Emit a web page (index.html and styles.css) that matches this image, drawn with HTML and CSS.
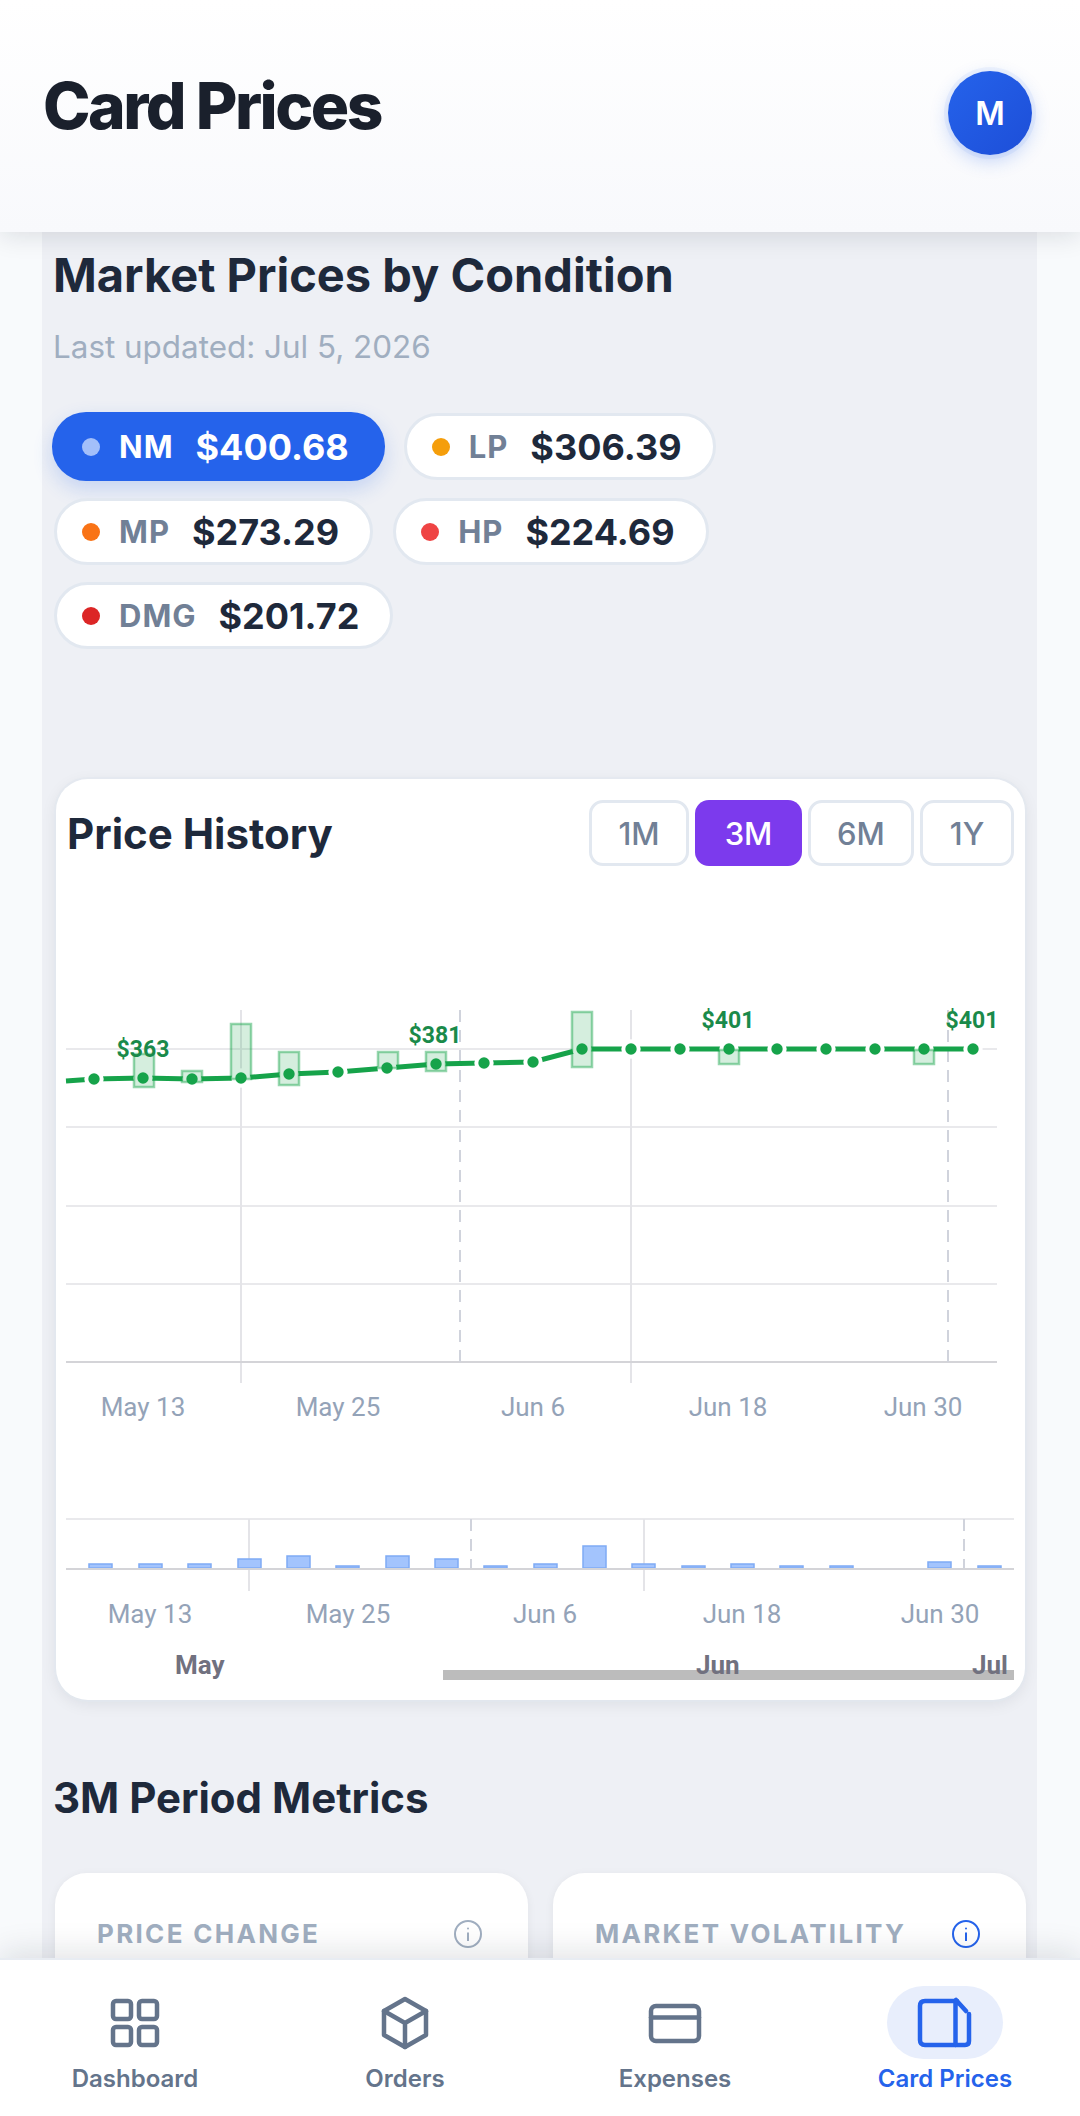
FILE: index.html
```html
<!DOCTYPE html>
<html>

<head>
	<title>Card Prices</title>
	<link rel="stylesheet" href="styles.css">
</head>

<body>
	<div class="app">
		<header class="top-bar">
			<h1>Card Prices</h1>
			<div class="avatar">M</div>
		</header>

		<main class="content">
			<h2 class="section-title">Market Prices by Condition</h2>
			<p class="updated">Last updated: Jul 5, 2026</p>

			<div class="chips">
				<div class="chip active"><span class="dot dot-nm"></span><span class="cond">NM</span><span class="price">$400.68</span></div>
				<div class="chip"><span class="dot dot-lp"></span><span class="cond">LP</span><span class="price">$306.39</span></div>
				<div class="chip"><span class="dot dot-mp"></span><span class="cond">MP</span><span class="price">$273.29</span></div>
				<div class="chip"><span class="dot dot-hp"></span><span class="cond">HP</span><span class="price">$224.69</span></div>
				<div class="chip"><span class="dot dot-dmg"></span><span class="cond">DMG</span><span class="price">$201.72</span></div>
			</div>

			<section class="chart-card">
				<div class="chart-head">
					<h2 class="chart-title">Price History</h2>
					<div class="ranges">
						<button class="range r-1m">1M</button>
						<button class="range r-3m active">3M</button>
						<button class="range r-6m">6M</button>
						<button class="range r-1y">1Y</button>
					</div>
				</div>
				<svg class="chart" width="969" height="834" viewBox="0 87 969 834">
					<defs>
						<g id="dot-set">
							<circle cx="38" cy="300" r="5.7"/><circle cx="87" cy="299" r="5.7"/><circle cx="136" cy="300" r="5.7"/>
							<circle cx="185" cy="299" r="5.7"/><circle cx="233" cy="295" r="5.7"/><circle cx="282" cy="293" r="5.7"/>
							<circle cx="331" cy="289" r="5.7"/><circle cx="380" cy="285" r="5.7"/><circle cx="428" cy="284" r="5.7"/>
							<circle cx="477" cy="283" r="5.7"/><circle cx="526" cy="270" r="5.7"/><circle cx="575" cy="270" r="5.7"/>
							<circle cx="624" cy="270" r="5.7"/><circle cx="673" cy="270" r="5.7"/><circle cx="721" cy="270" r="5.7"/>
							<circle cx="770" cy="270" r="5.7"/><circle cx="819" cy="270" r="5.7"/><circle cx="868" cy="270" r="5.7"/>
							<circle cx="917" cy="270" r="5.7"/>
						</g>
					</defs>
					<g class="grid">
						<path d="M10 270H941M10 348H941M10 427H941M10 505H941"/>
						<path class="grid-v" d="M185 231V604M575 231V604"/>
					</g>
					<path class="axis" d="M10 583H941"/>
					<path class="dash" d="M404 231V583M892 231V583"/>

					<polyline class="line" points="10,302 38,300 87,299 136,300 185,299 233,295 282,293 331,289 380,285 428,284 477,283 526,270 575,270 624,270 673,270 721,270 770,270 819,270 868,270 917,270"/>
					<use class="halo" href="#dot-set"/>

					<g class="candle">
						<rect x="78" y="275" width="20" height="33"/>
						<rect x="126" y="292" width="20" height="11"/>
						<rect x="175" y="245" width="20" height="55"/>
						<rect x="223" y="273" width="20" height="33"/>
						<rect x="322" y="273" width="20" height="16"/>
						<rect x="370" y="273" width="20" height="19"/>
						<rect x="516" y="233" width="20" height="55"/>
						<rect x="663" y="271" width="20" height="14"/>
						<rect x="858" y="271" width="20" height="14"/>
					</g>

					<use class="points" href="#dot-set"/>
					<g class="value-label">
						<text x="87" y="278">$363</text>
						<text x="379" y="264">$381</text>
						<text x="672" y="249">$401</text>
						<text x="916" y="249">$401</text>
					</g>
					<g class="date-label">
						<text x="87" y="637">May 13</text>
						<text x="282" y="637">May 25</text>
						<text x="477" y="637">Jun 6</text>
						<text x="672" y="637">Jun 18</text>
						<text x="867" y="637">Jun 30</text>
					</g>

					<g class="grid">
						<path d="M10 740H958"/>
						<path class="grid-v" d="M193 740V812M588 740V812"/>
					</g>
					<path class="dash" d="M415 740V790M908 740V790"/>
					<g class="volume">
						<rect x="33" y="785" width="23" height="4"/>
						<rect x="83" y="785" width="23" height="4"/>
						<rect x="132" y="785" width="23" height="4"/>
						<rect x="182" y="780" width="23" height="9"/>
						<rect x="231" y="777" width="23" height="12"/>
						<rect x="280" y="787" width="23" height="2"/>
						<rect x="330" y="777" width="23" height="12"/>
						<rect x="379" y="780" width="23" height="9"/>
						<rect x="428" y="787" width="23" height="2"/>
						<rect x="478" y="785" width="23" height="4"/>
						<rect x="527" y="767" width="23" height="22"/>
						<rect x="576" y="785" width="23" height="4"/>
						<rect x="626" y="787" width="23" height="2"/>
						<rect x="675" y="785" width="23" height="4"/>
						<rect x="724" y="787" width="23" height="2"/>
						<rect x="774" y="787" width="23" height="2"/>
						<rect x="872" y="783" width="23" height="6"/>
						<rect x="922" y="787" width="23" height="2"/>
					</g>
					<path class="axis" d="M10 790H958"/>
					<g class="date-label">
						<text x="94" y="844">May 13</text>
						<text x="292" y="844">May 25</text>
						<text x="489" y="844">Jun 6</text>
						<text x="686" y="844">Jun 18</text>
						<text x="884" y="844">Jun 30</text>
					</g>

					<rect class="scroll-bar" x="387" y="891" width="571" height="10"/>
					<g class="month-label">
						<text x="119" y="895">May</text>
						<text x="640" y="895">Jun</text>
						<text x="916" y="895">Jul</text>
					</g>
				</svg>
			</section>

			<h2 class="section-title metrics-title">3M Period Metrics</h2>

			<div class="metrics">
				<div class="metric">
					<span class="metric-label">PRICE CHANGE</span>
					<svg class="info" width="28" height="28" viewBox="0 0 28 28"><circle cx="14" cy="14" r="13"/><path d="M14 12.5V21"/><circle class="info-dot" cx="14" cy="8.5" r="1"/></svg>
				</div>
				<div class="metric">
					<span class="metric-label">MARKET VOLATILITY</span>
					<svg class="info info-blue" width="28" height="28" viewBox="0 0 28 28"><circle cx="14" cy="14" r="13"/><path d="M14 12.5V21"/><circle class="info-dot" cx="14" cy="8.5" r="1"/></svg>
				</div>
			</div>
		</main>

		<nav class="bottom-nav">
			<div class="nav-item">
				<div class="nav-icon">
					<svg width="52" height="52" viewBox="0 0 52 52"><rect x="4" y="4" width="18" height="18" rx="3"/><rect x="30" y="4" width="18" height="18" rx="3"/><rect x="4" y="30" width="18" height="18" rx="3"/><rect x="30" y="30" width="18" height="18" rx="3"/></svg>
				</div>
				<span>Dashboard</span>
			</div>
			<div class="nav-item">
				<div class="nav-icon">
					<svg width="52" height="52" viewBox="0 0 52 52"><path d="M26 2L47 14V38L26 50L5 38V14Z"/><path d="M5 14L26 26L47 14M26 26V50"/></svg>
				</div>
				<span>Orders</span>
			</div>
			<div class="nav-item">
				<div class="nav-icon">
					<svg width="52" height="52" viewBox="0 0 52 52"><rect x="2" y="9" width="48" height="35" rx="5"/><path d="M2 20.5H50"/></svg>
				</div>
				<span>Expenses</span>
			</div>
			<div class="nav-item current">
				<div class="nav-icon">
					<svg width="52" height="52" viewBox="0 0 52 52"><path d="M38 4H6Q1 4 1 9V43Q1 48 6 48H46Q50 48 50 44V17"/><path d="M36.5 4V48M37 3L47 14"/></svg>
				</div>
				<span>Card Prices</span>
			</div>
		</nav>
	</div>
</body>

</html>
```

FILE: styles.css
```css
* {
	box-sizing: border-box;
}

body {
	margin: 0;
	font-family: Inter, "Noto Sans", sans-serif;
	background-color: #f8fafc;
}

.app {
	width: 1080px;
	height: 2116px;
	overflow: hidden;
	position: relative;
}

.top-bar {
	height: 232px;
	padding: 0 48px 6px 43px;
	display: flex;
	align-items: center;
	justify-content: space-between;
	background: linear-gradient(180deg, #ffffff, #f8f9fc);
	box-shadow: 0 4px 24px rgba(15, 23, 42, 0.12);
	position: relative;
	z-index: 2;
}

.top-bar h1 {
	margin: 0 0 16px;
	font-size: 64px;
	font-weight: 800;
	letter-spacing: -2.5px;
	color: #1a202c;
}

.avatar {
	width: 84px;
	height: 84px;
	border-radius: 50%;
	display: flex;
	align-items: center;
	justify-content: center;
	font-size: 32px;
	font-weight: 600;
	color: #ffffff;
	background: linear-gradient(135deg, #2563eb, #1d4ed8);
	box-shadow: 0 0 0 4px rgba(37, 99, 235, 0.06), 0 6px 18px rgba(37, 99, 235, 0.25);
}

.content {
	height: 1884px;
	margin: 0 43px 0 42px;
	padding: 13px 11px 0;
	background-color: #eef0f5;
}

.section-title {
	margin: 0;
	font-size: 47px;
	line-height: 60px;
	font-weight: 700;
	color: #1e293b;
}

.updated {
	margin: 21px 0 0;
	font-size: 31.4px;
	line-height: 42px;
	color: #a0aec0;
}

.chips {
	margin: 44px 0 0 1px;
	display: flex;
	flex-wrap: wrap;
	align-items: center;
	gap: 17px 20px;
	width: 800px;
}

.chip {
	height: 67px;
	padding: 0 31px 0 25px;
	display: flex;
	align-items: center;
	border-radius: 34px;
	background-color: #ffffff;
	border: 3px solid #e2e8f0;
	font-size: 36px;
}

.chip.active {
	height: 69px;
	margin: 0 -1px 0 -2px;
	padding: 0 36px 0 30px;
	border: 0;
	background-color: #2563eb;
	box-shadow: 0 8px 20px rgba(37, 99, 235, 0.2);
}

.dot {
	width: 18px;
	height: 18px;
	border-radius: 50%;
	margin-right: 19px;
}

.dot-nm { background-color: #a3bffa; }
.dot-lp { background-color: #f59e0b; }
.dot-mp { background-color: #f97316; }
.dot-hp { background-color: #ef4444; }
.dot-dmg { background-color: #dc2626; }

.cond {
	margin-right: 22px;
	font-size: 31px;
	font-weight: 700;
	letter-spacing: 1px;
	color: #718096;
}

.price {
	font-weight: 700;
	color: #1e293b;
}

.chip.active .cond,
.chip.active .price {
	color: #ffffff;
}

.chart-card {
	width: 969px;
	height: 921px;
	margin: 130px 0 0 3px;
	border-radius: 32px;
	background-color: #ffffff;
	box-shadow: 0 0 0 2px rgba(226, 232, 240, 0.7), 0 4px 16px rgba(15, 23, 42, 0.08);
	overflow: hidden;
}

.chart-head {
	height: 87px;
	padding: 21px 11px 0;
	display: flex;
	align-items: center;
	justify-content: space-between;
}

.chart-title {
	margin: 0;
	font-size: 42px;
	font-weight: 700;
	color: #1e293b;
}

.ranges {
	display: flex;
	gap: 6px;
}

.range {
	height: 66px;
	padding: 0;
	border: 3px solid #e2e8f0;
	border-radius: 14px;
	background-color: #ffffff;
	font-family: inherit;
	font-size: 31px;
	font-weight: 500;
	color: #718096;
}

.r-1m { width: 100px; }
.r-3m { width: 107px; }
.r-6m { width: 106px; }
.r-1y { width: 94px; }

.range.active {
	border: 0;
	color: #ffffff;
	background-color: #7c3aed;
}

.chart {
	display: block;
}

.grid path {
	stroke: #e9e9ec;
	stroke-width: 2;
	fill: none;
}

.grid .grid-v {
	stroke: #e4e4e8;
}

.axis {
	stroke: #d4d4d8;
	stroke-width: 2;
	fill: none;
}

.dash {
	stroke: #d0d3dc;
	stroke-width: 2;
	stroke-dasharray: 12 8;
	fill: none;
}

.candle rect {
	fill: rgba(22, 163, 74, 0.18);
	stroke: rgba(22, 163, 74, 0.45);
	stroke-width: 2.5;
}

.line {
	fill: none;
	stroke: #16a34a;
	stroke-width: 5;
}

.halo {
	fill: #ffffff;
	stroke: #ffffff;
	stroke-width: 8;
}

.points {
	fill: #16a34a;
}

.value-label text {
	font-family: Roboto, sans-serif;
	font-size: 23px;
	font-weight: 700;
	fill: #1a8a4a;
	text-anchor: middle;
}

.date-label text {
	font-family: Roboto, sans-serif;
	font-size: 26px;
	fill: #94a3b8;
	text-anchor: middle;
}

.volume rect {
	fill: #a3c4fd;
	stroke: #7fabf5;
	stroke-width: 1.5;
}

.scroll-bar {
	fill: #bcbcbc;
}

.month-label text {
	font-family: Roboto, sans-serif;
	font-size: 26px;
	font-weight: 700;
	fill: #71717f;
}

.metrics-title {
	margin-top: 68px;
	font-size: 42px;
}

.metrics {
	margin: 45px 0 0 2px;
	display: grid;
	grid-template-columns: 473px 473px;
	gap: 25px;
}

.metric {
	height: 200px;
	padding: 44px 46px 0 42px;
	display: flex;
	align-items: flex-start;
	justify-content: space-between;
	border-radius: 32px;
	background-color: #ffffff;
	box-shadow: 0 2px 10px rgba(15, 23, 42, 0.06);
}

.metric-label {
	font-size: 26px;
	line-height: 34px;
	font-weight: 700;
	letter-spacing: 2.3px;
	color: #a0aec0;
}

.info {
	margin-top: 3px;
}

.info circle,
.info path {
	fill: none;
	stroke: #a0aec0;
	stroke-width: 2;
}

.info .info-dot {
	fill: #a0aec0;
	stroke: none;
}

.info-blue circle,
.info-blue path {
	stroke: #2563eb;
}

.info-blue .info-dot {
	fill: #2563eb;
}

.bottom-nav {
	position: absolute;
	left: 0;
	right: 0;
	bottom: 0;
	height: 158px;
	display: grid;
	grid-template-columns: repeat(4, 1fr);
	background-color: #ffffff;
	border-top: 2px solid #e8ecf2;
	box-shadow: 0 -6px 30px rgba(15, 23, 42, 0.12);
	z-index: 2;
}

.nav-item {
	padding-top: 26px;
	display: flex;
	flex-direction: column;
	align-items: center;
	font-size: 24px;
	font-weight: 600;
	color: #64748b;
}

.nav-icon {
	width: 116px;
	height: 73px;
	display: flex;
	align-items: center;
	justify-content: center;
	border-radius: 37px;
}

.nav-icon svg {
	overflow: visible;
}

.nav-icon svg * {
	fill: none;
	stroke: #64748b;
	stroke-width: 4.5;
	stroke-linejoin: round;
	stroke-linecap: round;
}

.nav-item span {
	margin-top: 5px;
}

.nav-item.current {
	color: #2563eb;
}

.current .nav-icon {
	background-color: #e8eefc;
}

.current .nav-icon svg * {
	stroke: #2563eb;
}
```
